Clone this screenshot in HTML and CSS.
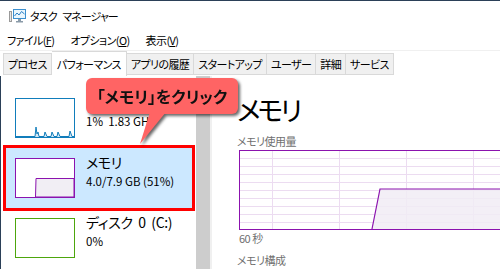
FILE: index.html
```html
<!DOCTYPE html>
<html lang="ja">
<head>
    <meta charset="UTF-8">
    <meta name="viewport" content="width=device-width, initial-scale=1.0">
    <title>タスク マネージャー</title>
    <link rel="stylesheet" href="styles.css">
</head>
<body>
    <div class="window">
        <div class="titlebar">
            <svg class="app-icon" width="17" height="14" viewBox="0 0 17 14">
                <rect x="0.5" y="2.5" width="2" height="10" fill="#e6e6e6" stroke="#9a9a9a"/>
                <rect x="4.5" y="0.5" width="12" height="9" fill="#eaf6fd" stroke="#3c8fcf"/>
                <polyline points="5.5,7 8,4 10,6 12.5,2.5 15.5,5" fill="none" stroke="#2a7fc6" stroke-width="1"/>
                <rect x="9" y="10" width="3" height="2" fill="#8a9aa8"/>
                <rect x="7" y="12" width="7" height="1.5" fill="#8a9aa8"/>
            </svg>
            <span class="title">タスク マネージャー</span>
        </div>

        <div class="menubar">
            <span class="menu-item">ファイル(<u>F</u>)</span>
            <span class="menu-item">オプション(<u>O</u>)</span>
            <span class="menu-item">表示(<u>V</u>)</span>
        </div>

        <div class="tabs">
            <div class="tab">プロセス</div>
            <div class="tab active">パフォーマンス</div>
            <div class="tab">アプリの履歴</div>
            <div class="tab">スタートアップ</div>
            <div class="tab">ユーザー</div>
            <div class="tab">詳細</div>
            <div class="tab">サービス</div>
        </div>

        <div class="content">
            <div class="sidebar">
                <div class="item">
                    <svg class="mini-graph" width="60" height="40" viewBox="0 0 60 40">
                        <polygon points="20,39 21,29 22,36 23,34 24,39 29,39 30,34 32,39 36,39 37,34 39,39 42,39 43,34 45,39 54,39 55,33 57,39" fill="#d3e7f5"/>
                        <polyline points="1,38.5 20,38.5 21,29 22,36 23,34 24,38.5 29,38.5 30,34 32,38.5 36,38.5 37,34 39,38.5 42,38.5 43,34 45,38.5 54,38.5 55,33 57,38.5 59,38.5" fill="none" stroke="#117dbb" stroke-width="1"/>
                        <rect x="0.5" y="0.5" width="59" height="39" fill="none" stroke="#117dbb"/>
                    </svg>
                    <div class="item-text">
                        <div class="item-name">CPU</div>
                        <div class="item-value">1%&nbsp; 1.83 GHz</div>
                    </div>
                </div>

                <div class="item selected">
                    <svg class="mini-graph" width="60" height="40" viewBox="0 0 60 40">
                        <rect x="0" y="0" width="60" height="40" fill="#ffffff"/>
                        <polygon points="20.5,39 21,20.5 59,20.5 59,39" fill="#f1eef4" stroke="#8b12ae" stroke-width="1"/>
                        <rect x="0.5" y="0.5" width="59" height="39" fill="none" stroke="#8b12ae"/>
                    </svg>
                    <div class="item-text">
                        <div class="item-name">メモリ</div>
                        <div class="item-value">4.0/7.9 GB (51%)</div>
                    </div>
                </div>

                <div class="item">
                    <svg class="mini-graph" width="60" height="40" viewBox="0 0 60 40">
                        <rect x="0.5" y="0.5" width="59" height="39" fill="none" stroke="#4da60c"/>
                    </svg>
                    <div class="item-text">
                        <div class="item-name">ディスク 0 (C:)</div>
                        <div class="item-value">0%</div>
                    </div>
                </div>
            </div>

            <div class="scrollbar"></div>

            <div class="main">
                <h1 class="heading">メモリ</h1>
                <div class="label">メモリ使用量</div>
                <svg class="usage-graph" width="270" height="80" viewBox="0 0 270 80">
                    <g stroke="#ecdcf1" stroke-width="1">
                        <line x1="0" y1="8.5" x2="270" y2="8.5"/>
                        <line x1="0" y1="16.5" x2="270" y2="16.5"/>
                        <line x1="0" y1="24.5" x2="270" y2="24.5"/>
                        <line x1="0" y1="32.5" x2="270" y2="32.5"/>
                        <line x1="0" y1="40.5" x2="270" y2="40.5"/>
                        <line x1="0" y1="48.5" x2="270" y2="48.5"/>
                        <line x1="0" y1="56.5" x2="270" y2="56.5"/>
                        <line x1="0" y1="64.5" x2="270" y2="64.5"/>
                        <line x1="0" y1="72.5" x2="270" y2="72.5"/>
                        <line x1="33.5" y1="0" x2="33.5" y2="80"/>
                        <line x1="100.5" y1="0" x2="100.5" y2="80"/>
                        <line x1="167.5" y1="0" x2="167.5" y2="80"/>
                        <line x1="234.5" y1="0" x2="234.5" y2="80"/>
                    </g>
                    <polygon points="133,79 141,39 270,39 270,79" fill="#f1ecf4" fill-opacity="0.85"/>
                    <polyline points="133,79 141,39 270,39" fill="none" stroke="#8b12ae" stroke-width="1.2"/>
                    <rect x="0.5" y="0.5" width="290" height="79" fill="none" stroke="#8b12ae"/>
                </svg>
                <div class="label axis">60 秒</div>
                <div class="label">メモリ構成</div>
            </div>
        </div>

        <div class="callout">「メモリ」をクリック</div>
    </div>
</body>
</html>
```

FILE: styles.css
```css
* {
    margin: 0;
    padding: 0;
    box-sizing: border-box;
}

body {
    font-family: 'Noto Sans CJK JP', 'Noto Sans', sans-serif;
    font-feature-settings: "palt";
    color: #000;
    background: #fff;
}

.window {
    position: relative;
    width: 500px;
    height: 269px;
    overflow: hidden;
    background: #fff;
    border-top: 1px solid #2b4058;
}

/* title bar */
.titlebar {
    display: flex;
    align-items: center;
    height: 29px;
    padding-left: 9px;
    gap: 4px;
}

.title {
    font-size: 11px;
    line-height: 14px;
    letter-spacing: -0.9px;
    word-spacing: 4px;
}

/* menu */
.menubar {
    display: flex;
    align-items: center;
    height: 20px;
    padding-left: 7px;
    gap: 16px;
    font-size: 11px;
    line-height: 14px;
    letter-spacing: -0.6px;
}

/* tabs */
.tabs {
    display: flex;
    align-items: flex-end;
    height: 26px;
    padding-left: 3px;
    border-top: 1px solid #f0f0f0;
}

.tab {
    height: 22px;
    margin-bottom: 1px;
    padding: 0 4px;
    font-size: 11px;
    line-height: 20px;
    letter-spacing: -0.6px;
    background: #f0f0f0;
    border: 1px solid #d9d9d9;
    border-left: none;
}

.tab:first-child {
    border-left: 1px solid #d9d9d9;
}

.tab.active {
    height: 25px;
    margin-bottom: 0;
    padding: 2px 5px 0;
    background: #fff;
    border-bottom: none;
}

/* content */
.content {
    display: flex;
    height: 193px;
}

.sidebar {
    width: 196px;
    padding-top: 12px;
    border-left: 1px solid #2b4058;
}

.item {
    display: flex;
    align-items: flex-start;
    gap: 11px;
    height: 60px;
    margin: 0 4px 0 5px;
    padding: 5px 0 0 9px;
}

.item.selected {
    background: #cce8ff;
    outline: 3px solid #ff0000;
}

.mini-graph {
    display: block;
    margin-top: 5px;
    flex-shrink: 0;
}

.item-name {
    font-size: 14px;
    line-height: 18px;
    letter-spacing: -0.4px;
    word-spacing: 3px;
    white-space: nowrap;
}

.item-value {
    margin-top: 3px;
    font-size: 11.5px;
    line-height: 15px;
    white-space: nowrap;
}

.scrollbar {
    width: 14px;
    background: #cdcdcd;
    border-right: 2px solid #f0f0f0;
    box-sizing: content-box;
}

.main {
    flex: 1;
    padding: 18px 0 0 25px;
    overflow: hidden;
}

.heading {
    font-size: 27px;
    font-weight: 400;
    line-height: 32px;
    letter-spacing: -3px;
}

.label {
    margin-top: 8px;
    font-size: 11px;
    line-height: 14px;
    letter-spacing: -0.5px;
    color: #707070;
    white-space: nowrap;
}

.usage-graph {
    display: block;
    margin: 2px 0 0 2px;
}

.label.axis {
    margin-top: 1px;
    margin-left: 2px;
}

/* annotation */
.callout {
    position: absolute;
    left: 86px;
    top: 77px;
    width: 152px;
    height: 36px;
    background: #ff6464;
    border-radius: 6px;
    font-size: 16px;
    font-weight: 700;
    line-height: 36px;
    text-align: center;
    color: #111;
    filter: drop-shadow(2px 2px 1.5px rgba(0, 0, 0, 0.6));
}

.callout::after {
    content: '';
    position: absolute;
    left: 54px;
    top: 34px;
    width: 26px;
    height: 32px;
    background: #ff6464;
    clip-path: polygon(10px 0, 26px 0, 0 32px);
}
```
